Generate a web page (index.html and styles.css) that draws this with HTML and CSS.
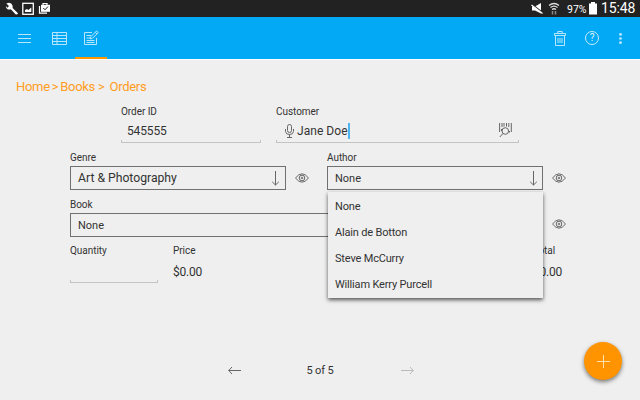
FILE: index.html
```html
<!DOCTYPE html>
<html lang="en">
<head>
<meta charset="utf-8">
<title>Orders</title>
<link rel="stylesheet" href="styles.css">
</head>
<body>
<svg class="defs" width="0" height="0" aria-hidden="true">
  <symbol id="eye" viewBox="0 0 14 10"><path d="M.5 5Q7-3.4 13.500 5Q7 13.400.5 5Z"/><circle cx="7" cy="5" r="2.800"/><circle cx="7" cy="5" r=".8"/></symbol>
  <symbol id="down" viewBox="0 0 8 15"><path d="M4.500 0V14M1.200 10.800 4.500 14 7.800 10.800"/></symbol>
</svg>
<div class="screen">
  <header class="status">
    <svg class="tray" width="50" height="17" viewBox="0 0 50 17">
      <path d="M6.300 3.500 8.900 6.100 7.600 7.700 5.800 5.900C6 9 8.600 10.200 10.800 9.200L15.500 14.200Q17.200 15 18 13.200L12.600 8C13.200 5.200 11.500 3 8.900 2.800Z" fill="#fff"/>
      <rect x="22.800" y="3.300" width="10.500" height="11" fill="none" stroke="#fff" stroke-width="1.300"/>
      <path d="M25 12V10L27 9 28.500 10 31.300 7.500V12Z" fill="#fff"/>
      <path d="M39.500 6V13.200H47" fill="none" stroke="#fff" stroke-width="1.200"/>
      <path d="M43 5V3.500H47V5" fill="none" stroke="#fff" stroke-width="1.200"/>
      <rect x="41" y="4.800" width="9" height="7" fill="#fff"/>
      <path d="M43.300 8 45 9.800 48 6.500" fill="none" stroke="#222" stroke-width="1"/>
    </svg>
    <div class="state">
      <svg width="12" height="13" viewBox="0 0 12 13"><path d="M1 4.500H4L10 1V11.500L4 8.500H1Z" fill="#fff"/><path d="M.5 2 11.500 10.500" stroke="#222" stroke-width="1.500"/><path d="M.5 3 11.500 11.500" stroke="#fff" stroke-width="1.300"/></svg>
      <svg class="wifi" width="12" height="13" viewBox="0 0 12 13"><path d="M1 3.500Q6-.5 11 3.500M2.500 5.600Q6 2.800 9.500 5.600M4 7.500Q6 6 8 7.500" fill="none" stroke="#ddd" stroke-width="1.300"/><path d="M4.500 9V12.500M7.500 9V12.500" stroke="#888" stroke-width="1.500"/></svg>
      <span class="percent">97%</span>
      <svg class="battery" width="8" height="13" viewBox="0 0 8 13"><path d="M2 0H6V1.500H8V12.500H0V1.500H2Z" fill="#fff"/></svg>
      <span class="clock">15:48</span>
    </div>
  </header>
  <nav class="appbar">
    <button class="tool menu" aria-label="Menu"><svg width="13" height="10" viewBox="0 0 13 10"><path d="M0 1.500H13M0 5.500H13M0 9.500H13"/></svg></button>
    <button class="tool table" aria-label="List"><svg width="15" height="13" viewBox="0 0 15 13"><path d="M.5.5H14.500V12.500H.5ZM.5 3.500H14.500M.5 6.500H14.500M.5 9.500H14.500M5 .5V12.500"/></svg></button>
    <button class="tool edit" aria-label="Edit"><svg width="15" height="15" viewBox="0 0 15 15"><path d="M8 2.500H.5V14.500H12.500V8M2.500 5.500H7M2.500 8H6M2.500 10.500H10.500M2.500 12.500H10.500M6 9 7 6.500 12.500 1 14.300 2.500 8.500 8.300ZM11.300 2.200 13 4"/></svg></button>
    <span class="grow"></span>
    <button class="tool trash" aria-label="Delete"><svg width="12" height="15" viewBox="0 0 12 15"><path d="M.5 2.500H11.500V4.500H.5ZM3.800 2.500V.5H8.200V2.500M1.500 4.500V14.500H10.500V4.500M4 7V12M6 7V12M8 7V12"/></svg></button>
    <button class="tool help" aria-label="Help">?</button>
    <button class="tool more" aria-label="More"><svg width="3" height="11" viewBox="0 0 3 11"><path class="dots" d="M.3.3H2.700V2.500H.3ZM.3 4.400H2.700V6.600H.3ZM.3 8.500H2.700V10.700H.3Z"/></svg></button>
  </nav>
  <main>
    <div class="crumbs"><span>Home</span><span>&gt;</span><span>Books</span><span>&gt;</span><span>Orders</span></div>
    <div class="row ids">
      <div class="field order"><label>Order ID</label><div class="line"><span class="big">545555</span></div></div>
      <div class="field customer"><label>Customer</label>
        <div class="line">
          <svg class="mic" width="9" height="14" viewBox="0 0 9 14"><rect x="2.500" y=".5" width="4" height="8" rx="2"/><path d="M.5 5V7.500Q.8 10.500 4.500 10.500T8.500 7.500V5M4.500 10.500V13.300M2 13.500H7"/></svg>
          <span class="big name">Jane Doe</span><i class="caret"></i>
          <svg class="scan" width="13" height="15" viewBox="0 0 13 15"><path d="M.6 0V9M3 0V4M5 0V3.500M7.500 0V3.500M9.800 0V4M12.300 0V9M2.500 6V8M10.500 8V9.500M4 10.500.8 14"/><circle cx="6.300" cy="8" r="3.300"/></svg>
        </div>
      </div>
    </div>
    <div class="row picks">
      <div class="field pick"><label>Genre</label><div class="select"><span class="big">Art &amp; Photography</span><svg width="8" height="15"><use href="#down"/></svg></div></div>
      <svg class="eye" width="14" height="10"><use href="#eye"/></svg>
      <div class="field pick author"><label>Author</label><div class="select"><span>None</span><svg width="8" height="15"><use href="#down"/></svg></div>
        <ul class="options"><li>None</li><li>Alain de Botton</li><li>Steve McCurry</li><li>William Kerry Purcell</li></ul>
      </div>
      <svg class="eye" width="14" height="10"><use href="#eye"/></svg>
    </div>
    <div class="row book">
      <div class="field"><label>Book</label><div class="select"><span>None</span></div></div>
      <svg class="eye" width="14" height="10"><use href="#eye"/></svg>
    </div>
    <div class="row sums">
      <div class="field quantity"><label>Quantity</label><div class="line"></div></div>
      <div class="field"><label>Price</label><span class="big money">$0.00</span></div>
      <div class="field total"><label>Total</label><span class="big money">$0.00</span></div>
    </div>
    <div class="pager">
      <svg width="13" height="9" viewBox="0 0 13 9"><path d="M13 4.500H.7M4 1 .7 4.500 4 8"/></svg>
      <span>5 of 5</span>
      <svg class="off" width="13" height="9" viewBox="0 0 13 9"><path d="M0 4.500H12.300M9 1 12.300 4.500 9 8"/></svg>
    </div>
  </main>
  <button class="fab" aria-label="Add"><svg width="13" height="13" viewBox="0 0 13 13"><path d="M0 6.500H13M6.500 0V13"/></svg></button>
</div>
</body>
</html>
```
FILE: styles.css
```css
* { box-sizing: border-box; }
body { margin: 0; font-family: Roboto, "Liberation Sans", sans-serif; color: #333; }
button { border: 0; padding: 0; background: none; font: inherit; }
svg { display: block; flex: none; }
.defs { position: absolute; }
.screen { position: relative; width: 640px; height: 400px; overflow: hidden; background: #efefef; }

.status { display: flex; justify-content: space-between; height: 17px; background: #222; color: #fff; }
.state { display: flex; align-items: center; height: 17px; padding-right: 5px; white-space: nowrap; }
.wifi { margin-left: 5px; }
.percent { width: 20px; margin-left: 7px; padding-top: 1px; font-size: 10.5px; }
.battery { margin-left: 2px; }
.clock { width: 34px; margin-left: 4px; font-size: 14px; letter-spacing: -.15px; line-height: 17px; }

.appbar { display: flex; height: 43px; background: #03a9f4; border-bottom: 1px solid #fff; padding: 0 18px; }
.tool { display: flex; align-items: center; justify-content: center; height: 42px; }
.tool svg { fill: none; stroke: #b8e6fd; stroke-width: 1; }
.tool .dots { fill: #d5f1ff; stroke: none; }
.menu { width: 13px; }
.table { width: 15px; margin-left: 21px; }
.edit { width: 32px; margin-left: 8px; border-bottom: 2px solid #ff9800; }
.grow { flex: 1; }
.trash { width: 12px; }
.help { width: 14px; height: 14px; margin: 14px 0 0 19px; border: 1px solid #c8ecfd; border-radius: 50%; color: #e0f5ff; font-size: 10px; line-height: 12px; }
.more { width: 3px; margin-left: 20px; }

.crumbs { display: flex; height: 20px; margin: 17px 0 0 16px; color: #ff9d1e; font-size: 13px; letter-spacing: -.3px; line-height: 20px; }
.crumbs span:nth-child(2) { margin: 0 2px 0 2px; }
.crumbs span:nth-child(4) { margin: 0 5px 0 3px; }

.row { display: flex; }
label { display: block; height: 14px; font-size: 10px; letter-spacing: -.05px; line-height: 14px; white-space: nowrap; }
.big { font-size: 12px; white-space: nowrap; }
.line {
  display: flex; align-items: center; border-bottom: 1px solid #c4c4c4;
  background: linear-gradient(#c4c4c4, #c4c4c4) left bottom / 1px 2px no-repeat, linear-gradient(#c4c4c4, #c4c4c4) right bottom / 1px 2px no-repeat;
}
.ids { gap: 15px; height: 46px; margin: 8px 0 0 121px; }
.ids .line { height: 24px; }
.ids .big { font-size: 12px; letter-spacing: -.15px; }
.order { width: 140px; }
.order .line { padding-left: 6px; }
.customer { width: 243px; }
.customer .line { padding: 0 7px 0 9px; }
.ids .name { margin-left: 3px; letter-spacing: .05px; }
.line .scan { margin-left: auto; }
.line svg, .eye, .select svg, .pager svg { fill: none; stroke: #666; stroke-width: 1; }
.caret { width: 2px; height: 16px; background: #4db5f2; }

.select { display: flex; align-items: center; justify-content: space-between; height: 24px; margin-top: 1px; padding: 0 6px 0 7px; border: 1px solid #707070; font-size: 11px; }
.select .big { font-size: 12.2px; }
.picks { height: 47px; margin-left: 70px; }
.pick { position: relative; width: 216px; }
.author .select { padding-right: 5px; }
.eye { margin: 22px 18px 0 9px; }
.options { position: absolute; z-index: 2; top: 41px; left: 1px; width: 215px; height: 106px; margin: 0; padding: 2px 7px; list-style: none; background: #efefef; font-size: 11px; letter-spacing: -.17px; box-shadow: 0 2px 4px rgba(0,0,0,.65); }
.options li { height: 26px; line-height: 26px; }
.book { height: 46px; margin-left: 70px; }
.book .field { width: 473px; }
.book .select { height: 24px; margin-top: 1px; }
.book .eye { margin-top: 21px; }
.sums { margin-left: 70px; }
.quantity { width: 88px; margin-right: 15px; }
.quantity .line { height: 25px; }
.money { display: block; width: 30px; margin-top: 7px; letter-spacing: -.2px; line-height: 15px; }
.total { margin-left: 330px; }

.pager { display: flex; align-items: center; justify-content: space-between; width: 186px; height: 16px; margin: 79px 0 0 228px; font-size: 11px; letter-spacing: -.15px; }
.pager span { margin-right: 2px; }
.pager .off { stroke: #bbb; }
.fab { position: absolute; left: 584px; top: 342px; display: grid; place-items: center; width: 38px; height: 38px; border-radius: 50%; background: #ff9400; box-shadow: 0 2px 4px rgba(0,0,0,.5); }
.fab svg { stroke: #ffe0b0; stroke-width: 1; }
```
